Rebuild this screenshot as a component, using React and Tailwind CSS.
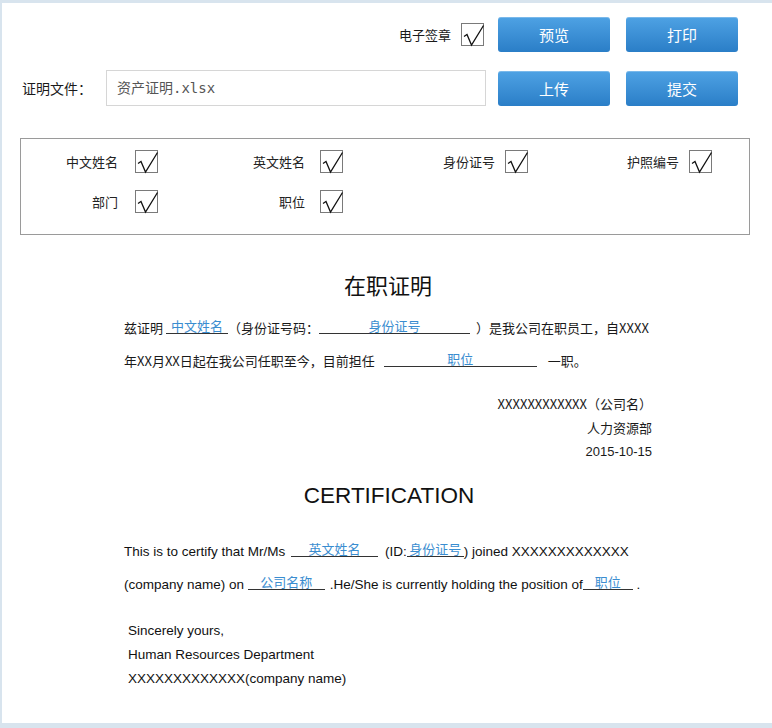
import React from 'react';

const cn = '[font-family:"Noto_Sans_CJK_SC","Noto_Sans",sans-serif]';

function Check() {
  return (
    <span className="inline-block w-[23px] h-[23px] border border-[#7a7a7a] bg-white shrink-0">
      <svg width="23" height="23" viewBox="0 0 23 23" className="overflow-visible">
        <path d="M2 12.5 L5 10.5 L9.5 21 L21.5 1.5" fill="none" stroke="#111" strokeWidth="1.3" />
      </svg>
    </span>
  );
}

function Btn({ children }) {
  return (
    <button className="w-[112px] h-[35px] rounded-[3px] bg-linear-to-b from-[#4ea2e4] to-[#2a7ec7] text-white text-[15px] leading-none shadow-[inset_0_1px_0_rgba(255,255,255,0.25)]">
      {children}
    </button>
  );
}

function Opt({ label, gap }) {
  return (
    <div className={`flex items-center justify-end ${gap}`}>
      <span className="text-[13px] text-[#222]">{label}</span>
      <Check />
    </div>
  );
}

function Blank({ w, children }) {
  return (
    <span
      className={`inline-block border-b border-[#333] text-center text-[#3a8dd0] text-[13px] align-[2px] leading-[15px] ${cn} ${w}`}
    >
      {children}
    </span>
  );
}

export default function App() {
  return (
    <div className={`w-[772px] h-[728px] bg-white border-t-[3px] border-l-[2px] border-b-[5px] border-[#d8e4ee] overflow-hidden ${cn} text-[#1a1a1a]`}>
      {/* top actions */}
      <div className="flex items-center justify-end pt-[14px] pr-[34px]">
        <span className="text-[13px] mr-[10px]">电子签章</span>
        <Check />
        <div className="flex gap-[16px] ml-[14px]">
          <Btn>预览</Btn>
          <Btn>打印</Btn>
        </div>
      </div>

      {/* file row */}
      <div className="flex items-center mt-[18px] pl-[20px]">
        <span className="text-[14px] w-[84px]">证明文件：</span>
        <div className="w-[380px] h-[36px] border border-[#d6d6d6] flex items-center pl-[10px] text-[14px] text-[#555] [font-family:'DejaVu_Sans_Mono','Noto_Sans_CJK_SC',monospace]">
          资产证明.xlsx
        </div>
        <div className="flex gap-[16px] ml-[12px]">
          <Btn>上传</Btn>
          <Btn>提交</Btn>
        </div>
      </div>

      {/* field options */}
      <div className="mt-[32px] ml-[18px] w-[730px] h-[97px] border border-[#9a9a9a] pt-[11px]">
        <div className="grid grid-cols-[137px_185px_185px_184px]">
          <Opt label="中文姓名" gap="gap-[17px]" />
          <Opt label="英文姓名" gap="gap-[15px]" />
          <Opt label="身份证号" gap="gap-[10px]" />
          <Opt label="护照编号" gap="gap-[10px]" />
        </div>
        <div className="grid grid-cols-[137px_185px_185px_184px] mt-[17px]">
          <Opt label="部门" gap="gap-[17px]" />
          <Opt label="职位" gap="gap-[15px]" />
        </div>
      </div>

      {/* Chinese certificate */}
      <div className="w-[528px] ml-[122px]">
        <div className="mt-[34px] h-[30px] leading-[30px] text-center text-[22px] text-[#111]">在职证明</div>
        <div className="mt-[12px] text-[13px]">
          <div className="h-[33px] leading-[33px] whitespace-nowrap">
            兹证明<Blank w="w-[62px] ml-[3px]">中文姓名</Blank>（身份证号码：<Blank w="w-[151px]">身份证号</Blank>
            <span className="ml-[6px]">）是我公司在职员工，自XXXX</span>
          </div>
          <div className="h-[33px] leading-[33px] whitespace-nowrap">
            年XX月XX日起在我公司任职至今，目前担任 <Blank w="w-[153px] ml-[6px]">职位</Blank>
            <span className="ml-[11px]">一职。</span>
          </div>
        </div>
        <div className="mt-[15px] text-[13px] leading-[24px] flex flex-col items-end">
          <div>XXXXXXXXXXXX（公司名）</div>
          <div>人力资源部</div>
          <div className="[font-family:'Liberation_Sans',sans-serif]">2015-10-15</div>
        </div>
      </div>

      {/* English certificate */}
      <div className="w-[560px] ml-[122px] [font-family:'Liberation_Sans','Noto_Sans_CJK_SC',sans-serif] text-[#111]">
        <div className="mt-[17px] h-[30px] leading-[30px] text-center text-[22.5px] w-[530px]">CERTIFICATION</div>
        <div className="mt-[24px] text-[13.5px]">
          <div className="h-[33px] leading-[33px] whitespace-nowrap">
            This is to certify that Mr/Ms <Blank w="w-[87px] ml-[2px]">英文姓名</Blank>
            <span className="ml-[7px]">(ID:</span>
            <Blank w="w-[57px]">身份证号</Blank>) joined XXXXXXXXXXXXX
          </div>
          <div className="h-[33px] leading-[33px] whitespace-nowrap">
            (company name) on <Blank w="w-[77px]">公司名称</Blank>
            <span className="ml-[5px]">.He/She is currently holding the position of</span>
            <Blank w="w-[50px]">职位</Blank> .
          </div>
        </div>
        <div className="mt-[18px] ml-[4px] text-[13.5px] leading-[24px]">
          <div>Sincerely yours,</div>
          <div>Human Resources Department</div>
          <div>XXXXXXXXXXXXX(company name)</div>
        </div>
      </div>
    </div>
  );
}
